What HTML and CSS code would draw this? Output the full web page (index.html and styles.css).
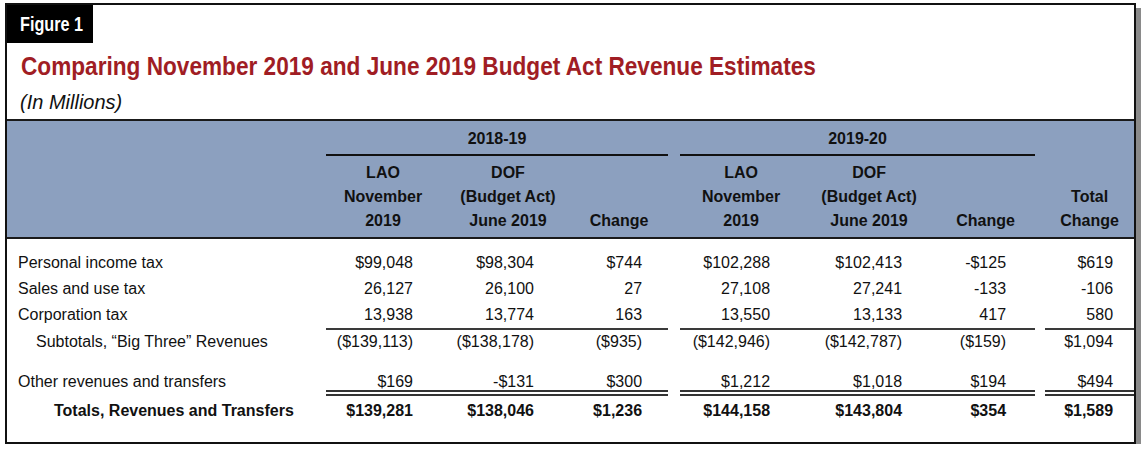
FILE: index.html
```html
<!DOCTYPE html>
<html>
<head>
<meta charset="utf-8">
<link rel="stylesheet" href="styles.css">
</head>
<body>
<div class="page">
  <div class="figure">
    <div class="fig-label"><span class="fig-text">Figure 1</span></div>
    <h1 class="title"><span class="title-text">Comparing November 2019 and June 2019 Budget Act Revenue Estimates</span></h1>
    <div class="subtitle">(In Millions)</div>
    <table class="data">
      <colgroup>
        <col class="w-label"><col class="w-c1"><col class="w-c2"><col class="w-c3"><col class="w-sp1">
        <col class="w-c4"><col class="w-c5"><col class="w-c6"><col class="w-sp2"><col class="w-c7">
      </colgroup>
      <thead>
        <tr class="group-row">
          <th></th>
          <th colspan="3" class="group">2018-19</th>
          <th></th>
          <th colspan="3" class="group">2019-20</th>
          <th></th>
          <th></th>
        </tr>
        <tr class="col-row">
          <th></th>
          <th>LAO<br>November<br>2019</th>
          <th>DOF<br>(Budget Act)<br>June 2019</th>
          <th class="chg">Change</th>
          <th></th>
          <th>LAO<br>November<br>2019</th>
          <th>DOF<br>(Budget Act)<br>June 2019</th>
          <th>Change</th>
          <th></th>
          <th>Total<br>Change</th>
        </tr>
      </thead>
      <tbody>
        <tr class="spacer-top"><td colspan="10"></td></tr>
        <tr class="row">
          <td class="label">Personal income tax</td>
          <td class="n c1">$99,048</td><td class="n c2">$98,304</td><td class="n c3">$744</td><td></td>
          <td class="n c4">$102,288</td><td class="n c5">$102,413</td><td class="n c6">-$125</td><td></td>
          <td class="n c7">$619</td>
        </tr>
        <tr class="row">
          <td class="label">Sales and use tax</td>
          <td class="n c1">26,127</td><td class="n c2">26,100</td><td class="n c3">27</td><td></td>
          <td class="n c4">27,108</td><td class="n c5">27,241</td><td class="n c6">-133</td><td></td>
          <td class="n c7">-106</td>
        </tr>
        <tr class="row rule">
          <td class="label">Corporation tax</td>
          <td class="n c1">13,938</td><td class="n c2">13,774</td><td class="n c3">163</td><td></td>
          <td class="n c4">13,550</td><td class="n c5">13,133</td><td class="n c6">417</td><td></td>
          <td class="n c7">580</td>
        </tr>
        <tr class="row sub">
          <td class="label indent1">Subtotals, “Big Three” Revenues</td>
          <td class="n c1">($139,113)</td><td class="n c2">($138,178)</td><td class="n c3">($935)</td><td></td>
          <td class="n c4">($142,946)</td><td class="n c5">($142,787)</td><td class="n c6">($159)</td><td></td>
          <td class="n c7">$1,094</td>
        </tr>
        <tr class="spacer-mid"><td colspan="10"></td></tr>
        <tr class="row other dbl">
          <td class="label">Other revenues and transfers</td>
          <td class="n c1">$169</td><td class="n c2">-$131</td><td class="n c3">$300</td><td></td>
          <td class="n c4">$1,212</td><td class="n c5">$1,018</td><td class="n c6">$194</td><td></td>
          <td class="n c7">$494</td>
        </tr>
        <tr class="row total">
          <td class="label indent2">Totals, Revenues and Transfers</td>
          <td class="n c1">$139,281</td><td class="n c2">$138,046</td><td class="n c3">$1,236</td><td></td>
          <td class="n c4">$144,158</td><td class="n c5">$143,804</td><td class="n c6">$354</td><td></td>
          <td class="n c7">$1,589</td>
        </tr>
      </tbody>
    </table>
  </div>
</div>
</body>
</html>
```
FILE: styles.css
```css
html, body {
  margin: 0;
  padding: 0;
  background: #ffffff;
}

body {
  font-family: "Liberation Sans", Arial, sans-serif;
  color: #111111;
}

.page {
  padding: 3px 0 0 5px;
}

.figure {
  width: 1131px;
  height: 441px;
  box-sizing: border-box;
  border: 2px solid #111111;
  box-shadow: 5px 5px 0 #8a8a8a;
  background: #ffffff;
}

.fig-label {
  width: 86px;
  height: 38px;
  box-sizing: border-box;
  background: #000000;
  color: #ffffff;
  font-weight: bold;
  font-size: 20px;
  line-height: 38px;
  padding-left: 13px;
  white-space: nowrap;
}

.fig-text {
  display: inline-block;
  transform: scaleX(0.81);
  transform-origin: 0 50%;
}

.title {
  margin: 9px 0 0 14px;
  font-weight: bold;
  font-size: 26px;
  line-height: 28px;
  color: #a01d24;
  white-space: nowrap;
}

.title-text {
  display: inline-block;
  transform: scaleX(0.87);
  transform-origin: 0 50%;
}

.subtitle {
  margin: 11px 0 0 13px;
  font-style: italic;
  font-size: 20px;
  line-height: 22px;
}

.data {
  margin-top: 6px;
  width: 1127px;
  table-layout: fixed;
  border-collapse: separate;
  border-spacing: 0;
  font-size: 16px;
}

.w-label { width: 319px; }
.w-c1 { width: 114px; }
.w-c2 { width: 136px; }
.w-c3 { width: 92px; }
.w-sp1 { width: 12px; }
.w-c4 { width: 122px; }
.w-c5 { width: 134px; }
.w-c6 { width: 99px; }
.w-sp2 { width: 10px; }
.w-c7 { width: 89px; }

.data th, .data td {
  padding: 0;
}

thead th {
  background: #8ca0bf;
  font-weight: bold;
  text-align: center;
}

.group-row th {
  border-top: 2px solid #1a1a1a;
  height: 37px;
  line-height: 20px;
  vertical-align: top;
  padding-top: 8px;
  box-sizing: border-box;
}

.group-row th.group {
  border-bottom: 2px solid #111111;
}

.group-row th:not(.group) {
  border-bottom: 2px solid #8ca0bf;
}

.col-row th {
  line-height: 24px;
  vertical-align: bottom;
  padding-top: 5px;
  padding-bottom: 4px;
  border-bottom: 2px solid #1a1a1a;
}

.col-row th.chg {
  padding-right: 6px;
}

.spacer-top td {
  height: 11px;
}

.spacer-mid td {
  height: 19px;
}

.row td {
  line-height: 26px;
  height: 26px;
  white-space: nowrap;
}

.row td.n {
  text-align: right;
}

.label {
  padding-left: 11px !important;
}

.indent1 {
  padding-left: 29px !important;
}

.indent2 {
  padding-left: 47px !important;
  font-weight: bold;
}

.c1 { padding-right: 27px !important; }
.c2 { padding-right: 42px !important; }
.c3 { padding-right: 26px !important; }
.c4 { padding-right: 32px !important; }
.c5 { padding-right: 34px !important; }
.c6 { padding-right: 29px !important; }
.c7 { padding-right: 21px !important; }

.rule td {
  border-bottom: 2px solid transparent;
}

.rule td.n {
  border-bottom-color: #3a3a3a;
}

.sub td {
  height: 24px;
  line-height: 24px;
}

.other td {
  height: 17px;
  line-height: 17px;
  vertical-align: bottom;
  border-bottom: 6px solid transparent;
}

.dbl td.n {
  border-bottom: 6px double #333333;
}

.total td {
  height: 30px;
  line-height: 30px;
  font-weight: bold;
}
```
